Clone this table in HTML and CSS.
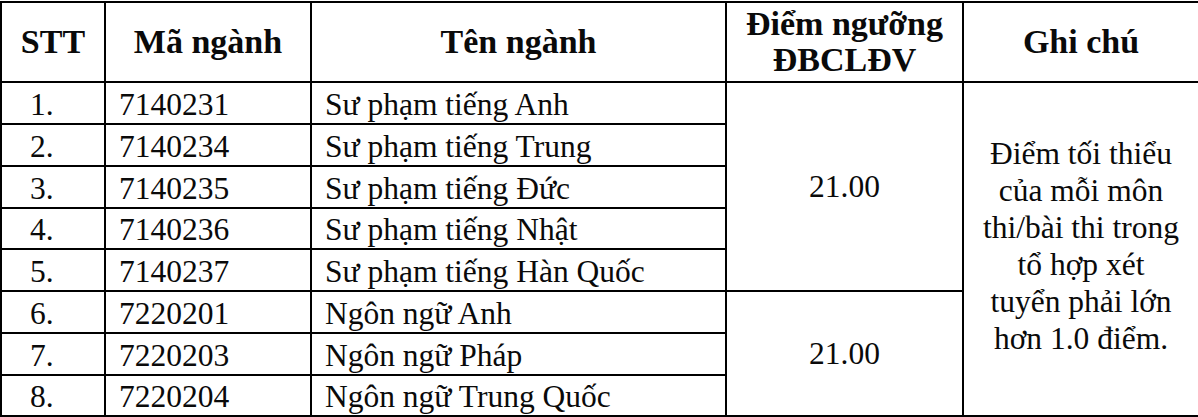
FILE: index.html
```html
<!DOCTYPE html>
<html lang="vi">
<head>
<meta charset="utf-8">
<link rel="stylesheet" href="styles.css">
</head>
<body>
<table class="grid">
  <colgroup>
    <col class="c-stt">
    <col class="c-ma">
    <col class="c-ten">
    <col class="c-diem">
    <col class="c-ghi">
  </colgroup>
  <thead>
    <tr class="head">
      <th>STT</th>
      <th>Mã ngành</th>
      <th>Tên ngành</th>
      <th class="two">Điểm ngưỡng<br>ĐBCLĐV</th>
      <th>Ghi chú</th>
    </tr>
  </thead>
  <tbody>
    <tr class="r-a">
      <td class="stt">1.</td><td>7140231</td><td>Sư phạm tiếng Anh</td>
      <td class="score" rowspan="5">21.00</td>
      <td class="note" rowspan="8">Điểm tối thiểu<br>của mỗi môn<br>thi/bài thi trong<br>tổ hợp xét<br>tuyển phải lớn<br>hơn 1.0 điểm.</td>
    </tr>
    <tr class="r-b"><td class="stt">2.</td><td>7140234</td><td>Sư phạm tiếng Trung</td></tr>
    <tr class="r-a"><td class="stt">3.</td><td>7140235</td><td>Sư phạm tiếng Đức</td></tr>
    <tr class="r-b"><td class="stt">4.</td><td>7140236</td><td>Sư phạm tiếng Nhật</td></tr>
    <tr class="r-a"><td class="stt">5.</td><td>7140237</td><td>Sư phạm tiếng Hàn Quốc</td></tr>
    <tr class="r-b">
      <td class="stt">6.</td><td>7220201</td><td>Ngôn ngữ Anh</td>
      <td class="score" rowspan="3">21.00</td>
    </tr>
    <tr class="r-a"><td class="stt">7.</td><td>7220203</td><td>Ngôn ngữ Pháp</td></tr>
    <tr class="r-b"><td class="stt">8.</td><td>7220204</td><td>Ngôn ngữ Trung Quốc</td></tr>
  </tbody>
</table>
</body>
</html>
```

FILE: styles.css
```css
html, body {
  margin: 0;
  padding: 0;
  background: #fff;
}

body {
  padding-top: 1px;
  font-family: "Liberation Serif", "Times New Roman", serif;
  color: #0a0a0a;
}

.grid {
  width: 1198px;
  border-collapse: collapse;
  table-layout: fixed;
  border: 2px solid #000;
}

.c-stt { width: 104px; }
.c-ma { width: 206px; }
.c-ten { width: 415px; }
.c-diem { width: 237px; }
.c-ghi { width: 236px; }

.grid th,
.grid td {
  border: 2px solid #000;
  padding: 0 13px;
}

.head { height: 80px; }

.head th {
  padding-top: 0;
  padding-bottom: 0;
  font-size: 34px;
  font-weight: bold;
  line-height: 36px;
  text-align: center;
  vertical-align: middle;
}

.grid td {
  font-size: 31.5px;
  line-height: 34px;
  text-align: left;
  vertical-align: bottom;
  padding-bottom: 1px;
}

.r-a { height: 42px; }
.r-b { height: 41.5px; }

.grid td.stt {
  padding-left: 28px;
}

.grid td.score {
  text-align: center;
  vertical-align: middle;
  padding: 0;
}

.grid td.note {
  text-align: center;
  vertical-align: middle;
  line-height: 37px;
  padding: 0 4px 6px;
}
```
